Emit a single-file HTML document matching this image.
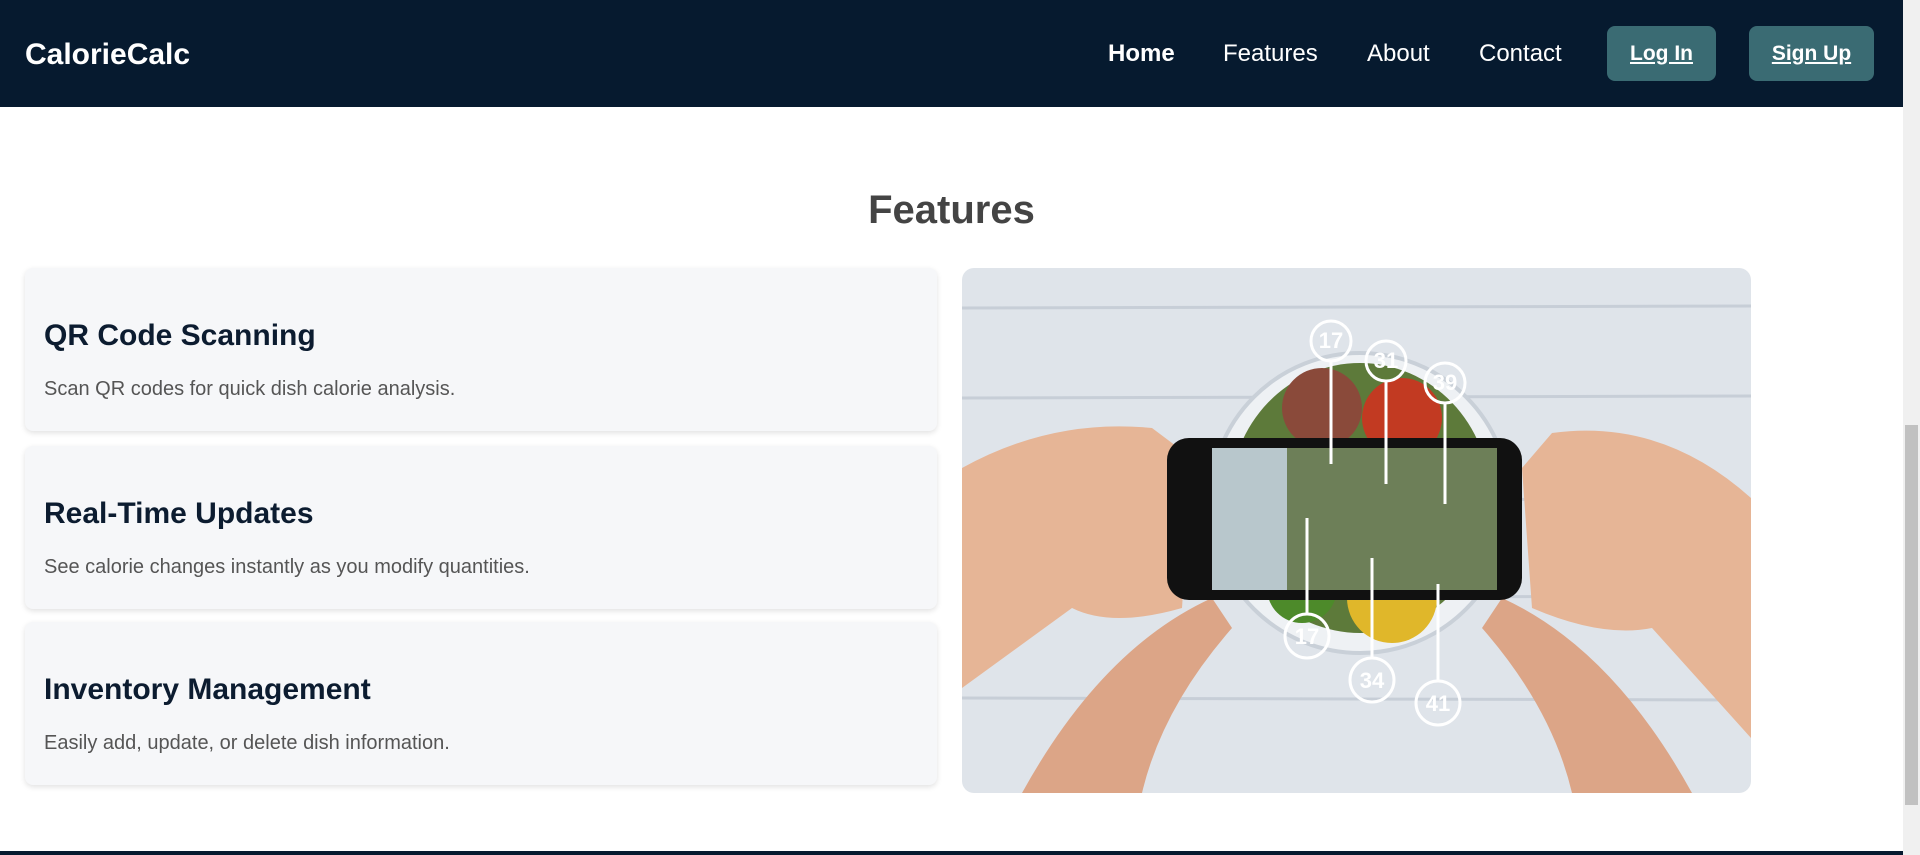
<!DOCTYPE html>
<html><head><meta charset="utf-8"><style>
*{margin:0;padding:0;box-sizing:border-box}
body{width:1920px;height:855px;overflow:hidden;background:#fff;font-family:"Liberation Sans",Arial,sans-serif;position:relative}
nav{position:absolute;left:0;top:0;width:1903px;height:107px;background:#061a2f;color:#fff}
.logo{position:absolute;left:25px;top:38px;font-size:30px;font-weight:bold}
.lnk{position:absolute;top:40px;font-size:24px}
.btn{position:absolute;top:26px;height:55px;background:#3a6b73;border-radius:8px;font-size:21px;font-weight:bold;text-decoration:underline;display:flex;align-items:center;justify-content:center}
h2{position:absolute;left:0;width:1903px;top:188px;text-align:center;font-size:40px;color:#444;font-weight:bold}
.card{position:absolute;left:25px;width:912px;height:163px;background:#f6f7f9;border-radius:8px;box-shadow:0 2px 6px rgba(0,0,0,.12)}
.card h3{position:absolute;left:19px;top:51px;font-size:30px;color:#0c1c30}
.card p{position:absolute;left:19px;top:110px;font-size:20px;color:#555}
.img{position:absolute;left:962px;top:268px;width:789px;height:525px;border-radius:12px;overflow:hidden}
.sb{position:absolute;left:1903px;top:0;width:17px;height:855px;background:#f0f0f0}
.th{position:absolute;left:1905px;top:425px;width:13px;height:380px;background:#c1c1c1}
.ft{position:absolute;left:0;top:851px;width:1903px;height:4px;background:#061a2f}
</style></head><body>
<nav>
<div class="logo">CalorieCalc</div>
<div class="lnk" style="left:1108px;font-weight:bold">Home</div>
<div class="lnk" style="left:1223px">Features</div>
<div class="lnk" style="left:1367px">About</div>
<div class="lnk" style="left:1479px">Contact</div>
<div class="btn" style="left:1607px;width:109px">Log In</div>
<div class="btn" style="left:1749px;width:125px">Sign Up</div>
</nav>
<h2>Features</h2>
<div class="card" style="top:268px"><h3>QR Code Scanning</h3><p>Scan QR codes for quick dish calorie analysis.</p></div>
<div class="card" style="top:446px"><h3>Real-Time Updates</h3><p>See calorie changes instantly as you modify quantities.</p></div>
<div class="card" style="top:622px"><h3>Inventory Management</h3><p>Easily add, update, or delete dish information.</p></div>
<div class="img"><svg width="789" height="525" viewBox="0 0 789 525">
<rect width="789" height="525" fill="#dfe4ea"/>
<g stroke="#c7ced7" stroke-width="3"><line x1="0" y1="40" x2="789" y2="38"/><line x1="0" y1="130" x2="789" y2="128"/><line x1="0" y1="230" x2="789" y2="232"/><line x1="0" y1="330" x2="789" y2="328"/><line x1="0" y1="430" x2="789" y2="432"/></g>
<ellipse cx="398" cy="235" rx="150" ry="150" fill="#eef1f4" stroke="#c9d0d8" stroke-width="4"/>
<ellipse cx="398" cy="230" rx="130" ry="135" fill="#5d7a3a"/>
<circle cx="360" cy="140" r="40" fill="#8a4a3a"/><circle cx="440" cy="150" r="40" fill="#c23a22"/>
<circle cx="430" cy="330" r="45" fill="#e0b72a"/><circle cx="340" cy="320" r="35" fill="#4d8a2a"/>
<path d="M0 200 Q90 150 190 160 L230 190 L220 340 Q150 360 110 340 L0 420Z" fill="#e6b596"/>
<path d="M789 230 Q700 150 590 165 L560 200 L570 340 Q640 370 690 360 L789 470Z" fill="#e6b596"/>
<path d="M60 525 Q140 380 250 330 L270 360 Q200 440 180 525Z" fill="#dca587"/>
<path d="M730 525 Q650 380 540 330 L520 360 Q590 440 610 525Z" fill="#dca587"/>
<rect x="205" y="170" width="355" height="162" rx="22" fill="#111"/>
<rect x="250" y="180" width="285" height="142" fill="#6d7f58"/>
<rect x="250" y="180" width="75" height="142" fill="#b8c7cc"/>
<g fill="none" stroke="#fff" stroke-width="3"><circle cx="369" cy="73" r="20"/><circle cx="424" cy="93" r="20"/><circle cx="483" cy="115" r="20"/><circle cx="345" cy="368" r="22"/><circle cx="410" cy="412" r="22"/><circle cx="476" cy="435" r="22"/>
<line x1="369" y1="93" x2="369" y2="196"/><line x1="424" y1="113" x2="424" y2="216"/><line x1="483" y1="135" x2="483" y2="236"/><line x1="345" y1="346" x2="345" y2="250"/><line x1="410" y1="390" x2="410" y2="290"/><line x1="476" y1="413" x2="476" y2="316"/></g>
<g fill="#fff" font-family="Liberation Sans" font-weight="bold" font-size="22" text-anchor="middle"><text x="369" y="80">17</text><text x="424" y="100">31</text><text x="483" y="122">39</text><text x="345" y="376">17</text><text x="410" y="420">34</text><text x="476" y="443">41</text></g>
</svg></div>
<div class="sb"></div><div class="th"></div><div class="ft"></div>
</body></html>
